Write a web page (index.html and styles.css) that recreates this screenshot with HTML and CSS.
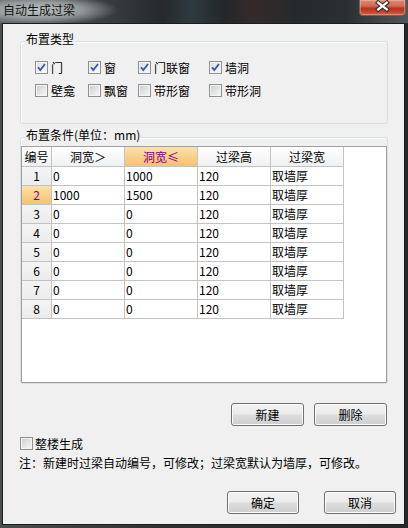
FILE: index.html
```html
<!DOCTYPE html>
<html lang="zh-CN">
<head>
<meta charset="utf-8">
<title>自动生成过梁</title>
<link rel="stylesheet" href="styles.css">
</head>
<body>
<div class="window">
  <div class="titlebar">
    <span class="title">自动生成过梁</span>
    <div class="close">
      <svg width="47" height="15" viewBox="0 0 47 15">
        <path d="M19 2.5 L28 9.5 M28 2.5 L19 9.5" stroke="#3a2a28" stroke-width="4.6" stroke-linecap="square" fill="none"/>
        <path d="M19 2.5 L28 9.5 M28 2.5 L19 9.5" stroke="#ffffff" stroke-width="2.4" stroke-linecap="square" fill="none"/>
      </svg>
    </div>
  </div>
  <div class="client">
    <div class="group g1">
      <span class="legend">布置类型</span>
      <div class="cb-grid">
        <div class="item"><span class="cb checked"><svg width="11" height="11" viewBox="0 0 11 11"><path d="M2 5.2 L4.3 8 L9 2" stroke="#3d54a0" stroke-width="1.8" fill="none"/></svg></span><span>门</span></div>
        <div class="item"><span class="cb checked"><svg width="11" height="11" viewBox="0 0 11 11"><path d="M2 5.2 L4.3 8 L9 2" stroke="#3d54a0" stroke-width="1.8" fill="none"/></svg></span><span>窗</span></div>
        <div class="item"><span class="cb checked"><svg width="11" height="11" viewBox="0 0 11 11"><path d="M2 5.2 L4.3 8 L9 2" stroke="#3d54a0" stroke-width="1.8" fill="none"/></svg></span><span>门联窗</span></div>
        <div class="item"><span class="cb checked"><svg width="11" height="11" viewBox="0 0 11 11"><path d="M2 5.2 L4.3 8 L9 2" stroke="#3d54a0" stroke-width="1.8" fill="none"/></svg></span><span>墙洞</span></div>
        <div class="item"><span class="cb"></span><span>壁龛</span></div>
        <div class="item"><span class="cb"></span><span>飘窗</span></div>
        <div class="item"><span class="cb"></span><span>带形窗</span></div>
        <div class="item"><span class="cb"></span><span>带形洞</span></div>
      </div>
    </div>
    <div class="group g2">
      <span class="legend">布置条件(单位：mm)</span>
      <div class="gridbox">
        <div class="table">
          <div class="th">编号</div>
          <div class="th">洞宽＞</div>
          <div class="th sel">洞宽≤</div>
          <div class="th">过梁高</div>
          <div class="th">过梁宽</div>

          <div class="rh">1</div><div class="td">0</div><div class="td">1000</div><div class="td">120</div><div class="td">取墙厚</div>
          <div class="rh sel">2</div><div class="td">1000</div><div class="td">1500</div><div class="td">120</div><div class="td">取墙厚</div>
          <div class="rh">3</div><div class="td">0</div><div class="td">0</div><div class="td">120</div><div class="td">取墙厚</div>
          <div class="rh">4</div><div class="td">0</div><div class="td">0</div><div class="td">120</div><div class="td">取墙厚</div>
          <div class="rh">5</div><div class="td">0</div><div class="td">0</div><div class="td">120</div><div class="td">取墙厚</div>
          <div class="rh">6</div><div class="td">0</div><div class="td">0</div><div class="td">120</div><div class="td">取墙厚</div>
          <div class="rh">7</div><div class="td">0</div><div class="td">0</div><div class="td">120</div><div class="td">取墙厚</div>
          <div class="rh">8</div><div class="td">0</div><div class="td">0</div><div class="td">120</div><div class="td">取墙厚</div>
        </div>
      </div>
    </div>
    <div class="btnrow1">
      <button class="btn w73">新建</button>
      <button class="btn w73">删除</button>
    </div>
    <div class="whole">
      <span class="cb"></span><span>整楼生成</span>
    </div>
    <div class="note">注：新建时过梁自动编号，可修改；过梁宽默认为墙厚，可修改。</div>
    <div class="btnrow2">
      <button class="btn w72">确定</button>
      <button class="btn w72">取消</button>
    </div>
  </div>
</div>
</body>
</html>
```
FILE: styles.css
```css
* { box-sizing: border-box; }
html, body { margin: 0; padding: 0; }
body {
  width: 408px;
  height: 528px;
  overflow: hidden;
  background: #2a2e30;
  font-family: "Noto Sans CJK SC", "Liberation Sans", sans-serif;
  font-size: 12px;
  color: #000;
}
.window {
  width: 408px;
  height: 528px;
  display: flex;
  flex-direction: column;
  background: linear-gradient(90deg, #4a4f51 0%, #2c3032 40%, #26292b 100%);
}
.titlebar {
  height: 23px;
  flex: none;
  display: flex;
  justify-content: space-between;
  align-items: flex-start;
  background:
    radial-gradient(ellipse 78px 15px at 40px 10px, rgba(196,202,202,0.95) 0%, rgba(170,177,178,0.75) 55%, rgba(120,126,128,0) 100%),
    linear-gradient(90deg, #5d6365 0%, #3a3f41 25%, #25292b 40%, #2e3a40 47%, #23272a 55%, #35292a 62%, #26292b 72%, #2b2f31 85%, #50575a 100%);
}
.title {
  padding-left: 3px;
  line-height: 20px;
  color: #111;
  white-space: nowrap;
}
.close {
  width: 47px;
  height: 16px;
  margin-right: 2px;
  border: 1px solid #6d5f5c;
  border-top: none;
  border-radius: 0 0 4px 4px;
  background: linear-gradient(#dc8a77 0%, #cf6b55 40%, #b8341d 55%, #c24329 78%, #d4664a 100%);
  box-shadow: inset 0 0 0 1px rgba(255, 215, 200, 0.35);
  display: flex;
}
.close svg { display: block; }
.client {
  margin: 0 3px 3px 2px;
  width: 403px;
  height: 502px;
  border: 1px solid #1c1c1c;
  background: #f0f0f0;
  display: flex;
  flex-direction: column;
}
.group {
  position: relative;
  margin-left: 17px;
  width: 368px;
  border: 1px solid #d5dfe5;
  border-radius: 3px;
  box-shadow: inset 1px 1px 0 #fff;
}
.legend {
  position: absolute;
  top: -11px;
  left: 4px;
  padding: 0 1px;
  line-height: 16px;
  background: #f0f0f0;
  white-space: nowrap;
}
.g1 {
  margin-top: 17px;
  height: 83px;
  padding: 19px 0 0 14px;
}
.cb-grid {
  display: grid;
  grid-template-columns: 53px 50px 71px auto;
  row-gap: 10px;
}
.item {
  display: flex;
  align-items: center;
  gap: 3px;
  height: 13px;
  line-height: 13px;
  white-space: nowrap;
}
.cb {
  flex: none;
  width: 13px;
  height: 13px;
  border: 1px solid #8e8f8f;
  background: linear-gradient(135deg, #c6cad0 0%, #e4e6e8 55%, #f8f8f8 100%);
  box-shadow: inset 0 0 0 1px #f4f4f4;
  display: flex;
  align-items: center;
  justify-content: center;
}
.cb.checked {
  background: linear-gradient(135deg, #d9dde3 0%, #eef0f2 60%, #fafafa 100%);
}
.cb svg { display: block; }
.g2 {
  margin-top: 13px;
  height: 247px;
  padding-top: 8px;
}
.gridbox {
  height: 237px;
  border: 1px solid #a0a0a0;
  background: #fff;
}
.table {
  display: grid;
  grid-template-columns: 30px repeat(4, 73px);
  width: 322px;
}
.th, .td, .rh {
  border-right: 1px solid #c3c3c3;
  border-bottom: 1px solid #c3c3c3;
  white-space: nowrap;
}
.th {
  height: 20px;
  line-height: 19px;
  text-align: center;
  background: linear-gradient(#ffffff 0%, #f9f9fa 45%, #eef0f2 100%);
}
.th.sel, .rh.sel {
  background: linear-gradient(#fce1ae 0%, #f8d18c 50%, #f4c272 100%);
  color: #800080;
}
.rh {
  height: 19px;
  line-height: 18px;
  text-align: center;
  background: linear-gradient(#f4f4f4, #ececec);
}
.td {
  height: 19px;
  line-height: 18px;
  padding-left: 1px;
}
.btn {
  height: 23px;
  padding: 0;
  font-family: inherit;
  font-size: 12px;
  color: #000;
  border: 1px solid #707070;
  border-radius: 3px;
  background: linear-gradient(#f2f2f2 0%, #ebebeb 48%, #dddddd 52%, #cfcfcf 100%);
  box-shadow: inset 0 0 0 1px #fcfcfc;
}
.w73 { width: 73px; }
.w72 { width: 72px; }
.btnrow1 {
  margin-top: 19px;
  display: flex;
  justify-content: flex-end;
  gap: 10px;
  padding-right: 17px;
}
.whole {
  margin-top: 11px;
  padding-left: 17px;
  display: flex;
  align-items: center;
  gap: 2px;
  height: 13px;
  line-height: 13px;
}
.note {
  margin-top: 6px;
  padding-left: 16px;
  line-height: 14px;
  white-space: nowrap;
}
.btnrow2 {
  margin-top: 21px;
  display: flex;
  justify-content: flex-end;
  gap: 25px;
  padding-right: 8px;
}
```
